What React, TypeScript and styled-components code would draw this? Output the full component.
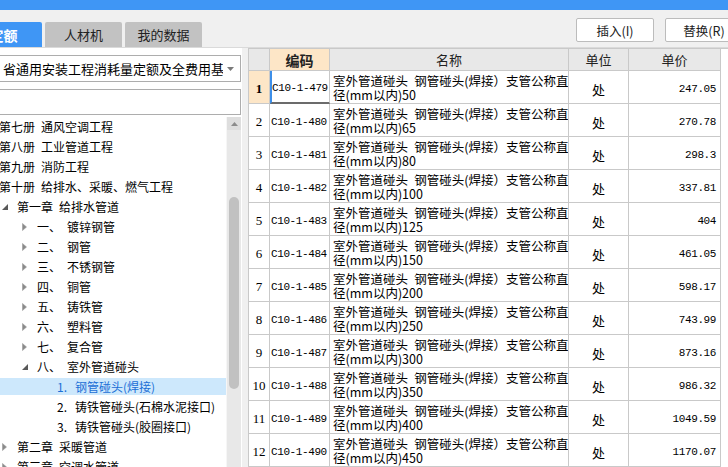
import React from 'react';
import styled, { createGlobalStyle, css } from 'styled-components';

const GlobalStyle = createGlobalStyle`
  html, body {
    margin: 0;
    padding: 0;
    background: #f0f0f0;
    overflow: hidden;
  }
  body {
    font-family: "Noto Sans CJK SC", "Noto Sans", sans-serif;
    color: #000;
  }
`;

const Page = styled.div`
  width: 728px;
  height: 467px;
  overflow: hidden;
  display: flex;
  flex-direction: column;
  background: #f0f0f0;
`;

const TopBar = styled.div`
  height: 10px;
  background: #3f96f5;
  flex-shrink: 0;
`;

const Toolbar = styled.div`
  height: 37px;
  border-bottom: 1px solid #dadada;
  display: flex;
  justify-content: space-between;
  flex-shrink: 0;
`;

const Tabs = styled.div`
  display: flex;
  gap: 3px;
  align-self: flex-end;
  margin-left: -35px;
`;

const Tab = styled.div<{ $active?: boolean }>`
  width: 77px;
  height: 25px;
  display: flex;
  align-items: center;
  justify-content: center;
  font-size: 13px;
  border-radius: 2px 2px 0 0;
  background: ${p => (p.$active ? '#3f96f5' : '#c2c2c2')};
  color: ${p => (p.$active ? '#fff' : '#222')};
  font-weight: ${p => (p.$active ? 700 : 400)};
  ${p => p.$active && css`font-size: 14px;`}
`;

const Actions = styled.div`
  display: flex;
  gap: 11px;
  margin-top: 8px;
  margin-right: -15px;
  align-self: flex-start;
`;

const ActionButton = styled.button`
  width: 78px;
  height: 24px;
  background: #fff;
  border: 1px solid #bcbcbc;
  border-radius: 2px;
  font-family: inherit;
  font-size: 12.5px;
  color: #222;
  padding: 0;
  display: flex;
  align-items: center;
  justify-content: center;
`;

const Main = styled.div`
  flex: 1;
  display: flex;
  min-height: 0;
`;

const LeftPanel = styled.div`
  width: 242px;
  background: #fff;
  display: flex;
  flex-direction: column;
  overflow: hidden;
  flex-shrink: 0;
`;

const Select = styled.div`
  margin: 7px 1px 0 -2px;
  height: 27px;
  box-sizing: border-box;
  border: 1px solid #adadad;
  display: flex;
  align-items: center;
  padding-left: 4px;
  font-size: 13px;
  white-space: nowrap;
  overflow: hidden;
  gap: 4px;
`;

const SelectText = styled.span`
  flex: 1;
  overflow: hidden;
`;

const SelectArrow = styled.svg`
  flex-shrink: 0;
  margin-right: 6px;
`;

const SearchBox = styled.div`
  margin: 7px 1px 0 -2px;
  height: 26px;
  box-sizing: border-box;
  border: 1px solid #adadad;
`;

const TreeArea = styled.div`
  flex: 1;
  display: flex;
  margin-top: 2px;
  min-height: 0;
`;

const TreeList = styled.div`
  flex: 1;
  padding-top: 1px;
  overflow: hidden;
`;

const TreeRow = styled.div<{ $selected?: boolean }>`
  height: 17px;
  margin-bottom: 3px;
  display: flex;
  align-items: center;
  font-size: 12px;
  white-space: nowrap;
  background: ${p => (p.$selected ? '#cde8fc' : 'transparent')};
  color: ${p => (p.$selected ? '#1b6fd6' : '#000')};
`;

const IconSlot = styled.span<{ $level: number }>`
  width: 15px;
  flex-shrink: 0;
  display: flex;
  align-items: center;
  margin-left: ${p => (p.$level === 0 ? -16 : p.$level * 20 - 18)}px;
`;

const Ordinal = styled.span<{ $w: number }>`
  display: inline-block;
  width: ${p => p.$w}px;
`;

const Scrollbar = styled.div`
  width: 14px;
  margin-right: 1px;
  background: #e8e8e8;
  border-left: 1px solid #f6f6f6;
  display: flex;
  flex-direction: column;
  align-items: center;
`;

const ScrollArrow = styled.div`
  height: 13px;
  width: 100%;
  background: #dedede;
  display: flex;
  align-items: center;
  justify-content: center;
`;

const ScrollThumb = styled.div`
  width: 10px;
  height: 192px;
  margin-top: 67px;
  border-radius: 5px;
  background: #c1c1c1;
`;

const Splitter = styled.div`
  width: 6px;
  flex-shrink: 0;
  background: #f0f0f0;
`;

const TablePanel = styled.div`
  flex: 1;
  background: #fff;
  overflow: hidden;
`;

const COLS = '21px 60px 239px 60px 92px';

const HeaderRow = styled.div`
  display: grid;
  grid-template-columns: ${COLS};
  height: 23px;
  box-sizing: border-box;
  border-top: 1px solid #c9c9c9;
  border-left: 1px solid #c9c9c9;
`;

const HeadCell = styled.div<{ $hot?: boolean }>`
  box-sizing: border-box;
  border-right: 1px solid #c9c9c9;
  border-bottom: 1px solid #c9c9c9;
  background: ${p => (p.$hot ? '#fde6c7' : '#e8e8e8')};
  display: flex;
  align-items: center;
  justify-content: center;
  font-size: ${p => (p.$hot ? '14px' : '13px')};
  font-weight: ${p => (p.$hot ? 700 : 400)};
  color: #222;
`;

const DataRow = styled.div`
  display: grid;
  grid-template-columns: ${COLS};
  height: 33px;
  border-left: 1px solid #c9c9c9;
`;

const Cell = styled.div`
  box-sizing: border-box;
  border-right: 1px solid #c9c9c9;
  border-bottom: 1px solid #c9c9c9;
  display: flex;
  align-items: center;
  overflow: hidden;
`;

const NumCell = styled(Cell)<{ $hot?: boolean }>`
  justify-content: center;
  padding-top: 3px;
  font-family: "Liberation Serif", serif;
  font-size: 13px;
  background: ${p => (p.$hot ? '#fde6c7' : '#fff')};
  font-weight: ${p => (p.$hot ? 700 : 400)};
`;

const CodeCell = styled(Cell)<{ $focus?: boolean }>`
  padding: 3px 0 0 1px;
  font-family: "Liberation Mono", monospace;
  font-size: 11px;
  letter-spacing: -0.4px;
  ${p =>
    p.$focus &&
    css`
      border-left: 2px solid #3d8fe9;
      border-bottom: 2px solid #6b6b6b;
      padding-left: 0;
    `}
`;

const NameCell = styled(Cell)`
  flex-direction: column;
  align-items: flex-start;
  justify-content: center;
  padding: 1px 0 0 3px;
  font-size: 12.5px;
  line-height: 14px;
  white-space: nowrap;
`;

const UnitCell = styled(Cell)`
  justify-content: center;
  padding-top: 4px;
  font-size: 13px;
`;

const PriceCell = styled(Cell)`
  justify-content: flex-end;
  padding: 3px 4px 0 0;
  font-family: "Liberation Mono", monospace;
  font-size: 11px;
  letter-spacing: -0.4px;
`;

const ExpandedIcon = () => (
  <svg width="6" height="6" viewBox="0 0 6 6">
    <polygon points="6,0 6,6 0,6" fill="#595959" />
  </svg>
);

const CollapsedIcon = () => (
  <svg width="5" height="8" viewBox="0 0 5 8">
    <polygon points="0.5,0.5 4.5,4 0.5,7.5" fill="#8a8a8a" stroke="#9a9a9a" strokeWidth="0.6" />
  </svg>
);

type TreeNode = {
  level: number;
  icon?: 'open' | 'closed';
  ord?: string;
  text: string;
  selected?: boolean;
};

// en space between the book / chapter number and its title, as wide as the original
const SP = '\u2002';

const tree: TreeNode[] = [
  { level: 0, text: `第七册${SP}通风空调工程` },
  { level: 0, text: `第八册${SP}工业管道工程` },
  { level: 0, text: `第九册${SP}消防工程` },
  { level: 0, text: `第十册${SP}给排水、采暖、燃气工程` },
  { level: 1, icon: 'open', text: `第一章${SP}给排水管道` },
  { level: 2, icon: 'closed', ord: '一、', text: '镀锌钢管' },
  { level: 2, icon: 'closed', ord: '二、', text: '钢管' },
  { level: 2, icon: 'closed', ord: '三、', text: '不锈钢管' },
  { level: 2, icon: 'closed', ord: '四、', text: '铜管' },
  { level: 2, icon: 'closed', ord: '五、', text: '铸铁管' },
  { level: 2, icon: 'closed', ord: '六、', text: '塑料管' },
  { level: 2, icon: 'closed', ord: '七、', text: '复合管' },
  { level: 2, icon: 'open', ord: '八、', text: '室外管道碰头' },
  { level: 3, ord: '1.', text: '钢管碰头(焊接)', selected: true },
  { level: 3, ord: '2.', text: '铸铁管碰头(石棉水泥接口)' },
  { level: 3, ord: '3.', text: '铸铁管碰头(胶圈接口)' },
  { level: 1, icon: 'closed', text: `第二章${SP}采暖管道` },
  { level: 1, icon: 'closed', text: `第三章${SP}空调水管道` },
];

const rows = [
  ['C10-1-479', '50', '247.05'],
  ['C10-1-480', '65', '270.78'],
  ['C10-1-481', '80', '298.3'],
  ['C10-1-482', '100', '337.81'],
  ['C10-1-483', '125', '404'],
  ['C10-1-484', '150', '461.05'],
  ['C10-1-485', '200', '598.17'],
  ['C10-1-486', '250', '743.99'],
  ['C10-1-487', '300', '873.16'],
  ['C10-1-488', '350', '986.32'],
  ['C10-1-489', '400', '1049.59'],
  ['C10-1-490', '450', '1170.07'],
];

const App: React.FC = () => {
  return (
    <>
      <GlobalStyle />
      <Page>
        <TopBar />
        <Toolbar>
          <Tabs>
            <Tab $active>定额</Tab>
            <Tab>人材机</Tab>
            <Tab>我的数据</Tab>
          </Tabs>
          <Actions>
            <ActionButton>插入(I)</ActionButton>
            <ActionButton>替换(R)</ActionButton>
          </Actions>
        </Toolbar>
        <Main>
          <LeftPanel>
            <Select>
              <SelectText>省通用安装工程消耗量定额及全费用基价表</SelectText>
              <SelectArrow width="7" height="4" viewBox="0 0 7 4">
                <polygon points="0,0 7,0 3.5,4" fill="#7a7a7a" />
              </SelectArrow>
            </Select>
            <SearchBox />
            <TreeArea>
              <TreeList>
                {tree.map((n, i) => (
                  <TreeRow key={i} $selected={n.selected}>
                    <IconSlot $level={n.level}>
                      {n.icon === 'open' && <ExpandedIcon />}
                      {n.icon === 'closed' && <CollapsedIcon />}
                    </IconSlot>
                    {n.ord && <Ordinal $w={n.level === 3 ? 18 : 30}>{n.ord}</Ordinal>}
                    <span>{n.text}</span>
                  </TreeRow>
                ))}
              </TreeList>
              <Scrollbar>
                <ScrollArrow>
                  <svg width="7" height="4" viewBox="0 0 7 4">
                    <polygon points="3.5,0 7,4 0,4" fill="#8c8c8c" />
                  </svg>
                </ScrollArrow>
                <ScrollThumb />
              </Scrollbar>
            </TreeArea>
          </LeftPanel>
          <Splitter />
          <TablePanel>
            <HeaderRow>
              <HeadCell />
              <HeadCell $hot>编码</HeadCell>
              <HeadCell>名称</HeadCell>
              <HeadCell>单位</HeadCell>
              <HeadCell>单价</HeadCell>
            </HeaderRow>
            {rows.map(([code, dn, price], i) => (
              <DataRow key={code}>
                <NumCell $hot={i === 0}>{i + 1}</NumCell>
                <CodeCell $focus={i === 0}>{code}</CodeCell>
                <NameCell>
                  <span>室外管道碰头{SP}钢管碰头(焊接）支管公称直</span>
                  <span>径(mm以内){dn}</span>
                </NameCell>
                <UnitCell>处</UnitCell>
                <PriceCell>{price}</PriceCell>
              </DataRow>
            ))}
          </TablePanel>
        </Main>
      </Page>
    </>
  );
};

export default App;
